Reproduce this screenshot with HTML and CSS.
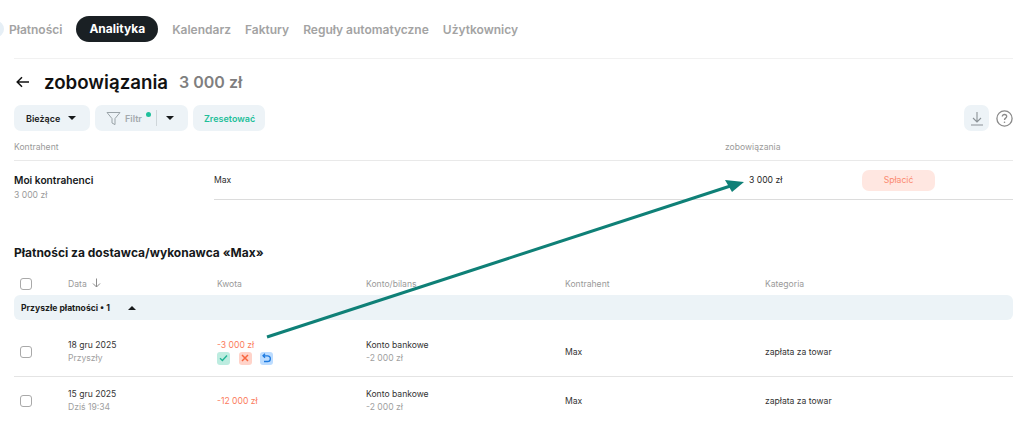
FILE: index.html
```html
<!DOCTYPE html>
<html lang="pl">
<head>
<meta charset="utf-8">
<title>zobowiązania</title>
<link rel="stylesheet" href="styles.css">
</head>
<body>
<div class="page">

    <nav class="nav">
        <span class="nav-dot"></span>
        <a class="nav-item">Płatności</a>
        <a class="nav-item active">Analityka</a>
        <a class="nav-item">Kalendarz</a>
        <a class="nav-item">Faktury</a>
        <a class="nav-item">Reguły automatyczne</a>
        <a class="nav-item">Użytkownicy</a>
    </nav>

    <div class="title-row">
        <svg class="back" width="14" height="12" viewBox="0 0 14 12"><path d="M13 6H1.5M6 1.2 1.2 6 6 10.8" fill="none" stroke="#111" stroke-width="1.5"/></svg>
        <h1>zobowiązania</h1>
        <span class="title-sum">3 000 zł</span>
    </div>

    <div class="toolbar">
        <button class="btn btn-period">Bieżące <i class="caret"></i></button>
        <div class="btn btn-filter">
            <svg width="15" height="15" viewBox="0 0 15 15"><path d="M1 1.5h13L9 7.6v6L6 12V7.6z" fill="none" stroke="#9aa3a8" stroke-width="1"/></svg>
            <span class="filter-label">Filtr</span>
            <span class="filter-dot"></span>
            <span class="filter-sep"></span>
            <i class="caret"></i>
        </div>
        <button class="btn btn-reset">Zresetować</button>
        <div class="toolbar-right">
            <div class="btn-download">
                <svg width="14" height="15" viewBox="0 0 14 15"><path d="M7 1v9.5M3 7l4 4 4-4M1 14h12" fill="none" stroke="#8b9297" stroke-width="1.1"/></svg>
            </div>
            <svg class="help" width="17" height="17" viewBox="0 0 17 17"><circle cx="8.5" cy="8.5" r="7.6" fill="none" stroke="#8a8a8a" stroke-width="1.3"/><path d="M6.3 6.6c0-1.3 1-2.1 2.2-2.1s2.2.8 2.2 2c0 1.7-2.2 1.6-2.2 3.4" fill="none" stroke="#8a8a8a" stroke-width="1.3"/><circle cx="8.5" cy="12.2" r=".8" fill="#8a8a8a"/></svg>
        </div>
    </div>

    <div class="summary-head">
        <span class="summary-name">Kontrahent</span>
        <span>zobowiązania</span>
    </div>
    <div class="summary">
        <div class="summary-left">
            <b>Moi kontrahenci</b>
            <span>3 000 zł</span>
        </div>
        <div class="summary-row">
            <span class="summary-max">Max</span>
            <span class="summary-sum">3 000 zł</span>
            <button class="btn-pay">Spłacić</button>
        </div>
    </div>

    <h2>Płatności za dostawca/wykonawca «Max»</h2>

    <div class="grid grid-head">
        <span class="check"></span>
        <span>Data <svg width="9" height="10" viewBox="0 0 9 10"><path d="M4.5 .5v8.5M1 5.5 4.5 9 8 5.5" fill="none" stroke="#8c8c8c" stroke-width="1"/></svg></span>
        <span>Kwota</span>
        <span>Konto/bilans</span>
        <span>Kontrahent</span>
        <span>Kategoria</span>
    </div>

    <div class="group">Przyszłe płatności • 1 <i class="caret-up"></i></div>

    <div class="grid row row-first">
        <span class="check"></span>
        <div class="two">18 gru 2025<small>Przyszły</small></div>
        <div class="two amount">-3 000 zł
            <div class="actions">
                <span class="act act-ok"><svg width="9" height="8" viewBox="0 0 9 8"><path d="M1 4.2 3.4 6.5 8 1.5" fill="none" stroke="#1fb594" stroke-width="1.4"/></svg></span>
                <span class="act act-no"><svg width="8" height="8" viewBox="0 0 8 8"><path d="M1 1l6 6M7 1 1 7" fill="none" stroke="#f8663f" stroke-width="1.5"/></svg></span>
                <span class="act act-undo"><svg width="9" height="10" viewBox="0 0 9 10"><path d="M3 .8 1 2.8l2 2M1 2.8h4.5a2.6 2.6 0 0 1 0 5.7H2" fill="none" stroke="#1e7be0" stroke-width="1.3"/></svg></span>
            </div>
        </div>
        <div class="two">Konto bankowe<small>-2 000 zł</small></div>
        <span>Max</span>
        <span>zapłata za towar</span>
    </div>

    <div class="grid row">
        <span class="check"></span>
        <div class="two">15 gru 2025<small>Dziś 19:34</small></div>
        <div class="amount">-12 000 zł</div>
        <div class="two">Konto bankowe<small>-2 000 zł</small></div>
        <span>Max</span>
        <span>zapłata za towar</span>
    </div>

    <!-- annotation drawn over the screenshot -->
    <svg class="annotation" width="1024" height="429" viewBox="0 0 1024 429">
        <path d="M267 337 735 184.5" stroke="#0f8077" stroke-width="3" fill="none"/>
        <path d="M744 182 725 180 732 192z" fill="#0f8077"/>
    </svg>
</div>
</body>
</html>
```

FILE: styles.css
```css
* {
    box-sizing: border-box;
}

body {
    margin: 0;
    background: #fff;
    font-family: Inter, "Noto Sans", sans-serif;
    color: #2b2b2b;
}

.page {
    position: relative;
    width: 1024px;
    height: 429px;
    overflow: hidden;
    padding: 0 11px 0 14px;
}

/* top menu */
.nav {
    position: relative;
    display: flex;
    align-items: center;
    height: 59px;
    margin-left: -14px;
    margin-right: -11px;
    padding: 0 0 1px 9px;
    font-size: 12px;
    font-weight: 600;
    color: #a3a3a3;
}

.nav::after {
    content: "";
    position: absolute;
    left: 14px;
    right: 11px;
    bottom: 0;
    height: 1px;
    background: #f1f1f1;
}

.nav-dot {
    position: absolute;
    left: -12px;
    top: 21px;
    width: 16px;
    height: 16px;
    border-radius: 50%;
    background: #e6eff6;
}

.nav-item {
    margin-right: 14px;
    white-space: nowrap;
}

.nav-item.active {
    margin: 0 14px 0 0;
    padding: 0 13px;
    height: 26px;
    line-height: 26px;
    border-radius: 13px;
    background: #1a2024;
    color: #fff;
    font-weight: 700;
}

/* title */
.title-row {
    display: flex;
    align-items: center;
    height: 46px;
    padding-left: 2px;
}

.back {
    margin-right: 14px;
}

h1 {
    margin: 0 11px 0 0;
    font-size: 18.7px;
    font-weight: 600;
    color: #111;
}

.title-sum {
    font-size: 16px;
    font-weight: 600;
    color: #7f7f7f;
}

/* filters */
.toolbar {
    display: flex;
    align-items: flex-start;
    gap: 5px;
    height: 37px;
}

.btn {
    display: flex;
    align-items: center;
    height: 26px;
    border: none;
    border-radius: 7px;
    background: #edf3f7;
    font-family: inherit;
    font-size: 9px;
    font-weight: 600;
}

.btn-period {
    width: 76px;
    padding: 0 0 0 12px;
    color: #1b1b1b;
}

.btn-period .caret {
    margin-left: 8px;
}

.caret {
    display: inline-block;
    border-left: 4.5px solid transparent;
    border-right: 4.5px solid transparent;
    border-top: 4.5px solid #16191b;
}

.btn-filter {
    position: relative;
    width: 93px;
    padding-left: 11px;
    color: #a3a9ad;
}

.filter-label {
    margin-left: 4px;
}

.filter-dot {
    width: 5px;
    height: 5px;
    margin: -8px 0 0 4px;
    border-radius: 50%;
    background: #1fc09c;
}

.filter-sep {
    width: 1px;
    height: 16px;
    margin: 0 9px 0 5px;
    background: #cfd6da;
}

.btn-reset {
    width: 72px;
    padding: 0 0 0 11px;
    color: #1fbf9a;
}

.toolbar-right {
    display: flex;
    align-items: center;
    gap: 7px;
    margin-left: auto;
}

.btn-download {
    display: flex;
    align-items: center;
    justify-content: center;
    width: 25px;
    height: 26px;
    border-radius: 7px;
    background: #edf3f7;
}

/* summary table */
.summary-head {
    display: flex;
    height: 19px;
    border-bottom: 1px solid #e9e9e9;
    font-size: 8.6px;
    line-height: 11px;
    color: #9a9a9a;
}

.summary-name {
    width: 711px;
}

.summary {
    display: flex;
    height: 39px;
}

.summary-left {
    width: 200px;
    padding-top: 13px;
}

.summary-left b {
    display: block;
    font-size: 10.2px;
    line-height: 13px;
    font-weight: 600;
    color: #16191b;
}

.summary-left span {
    display: block;
    margin-top: 3px;
    font-size: 8.6px;
    line-height: 11px;
    color: #9a9a9a;
}

.summary-row {
    flex: 1;
    display: flex;
    align-items: center;
    border-bottom: 1px solid #dcdcdc;
    font-size: 8.6px;
}

.summary-max {
    width: 535px;
}

.summary-sum {
    width: 113px;
    color: #1f1f1f;
}

.btn-pay {
    width: 73px;
    height: 21px;
    border: none;
    border-radius: 7px;
    background: #ffe7e1;
    color: #fb8a70;
    font-family: inherit;
    font-size: 8.6px;
}

h2 {
    margin: 43px 0 0;
    height: 29px;
    font-size: 12px;
    line-height: 20px;
    font-weight: 700;
    color: #16191b;
}

/* payments table */
.grid {
    display: grid;
    grid-template-columns: 54px 149px 149px 199px 200px 1fr;
    align-items: center;
    font-size: 8.6px;
}

.grid-head {
    height: 23px;
    color: #9a9a9a;
}

.grid-head svg {
    margin-left: 3px;
    vertical-align: -1px;
}

.check {
    display: block;
    width: 12px;
    height: 12px;
    margin-left: 6px;
    border: 1px solid #a9a9a9;
    border-radius: 3px;
    background: #fff;
}

.group {
    display: flex;
    align-items: center;
    height: 25px;
    padding-left: 7px;
    border-radius: 6px;
    background: #ecf3f7;
    font-size: 8.6px;
    font-weight: 700;
    color: #1b1b1b;
}

.caret-up {
    margin-left: 18px;
    border-left: 4.5px solid transparent;
    border-right: 4.5px solid transparent;
    border-bottom: 4px solid #16191b;
}

.row {
    height: 47px;
    color: #333;
}

.row-first {
    height: 57px;
    padding-top: 7px;
    border-bottom: 1px solid #e4e4e4;
}

.two {
    line-height: 13px;
}

small {
    display: block;
    font-size: 8.6px;
    color: #a0a0a0;
}

.amount {
    color: #fb7b5c;
}

.actions {
    display: flex;
    gap: 8.5px;
}

.act {
    display: flex;
    align-items: center;
    justify-content: center;
    width: 13px;
    height: 13px;
    border-radius: 3px;
}

.act-ok {
    background: #bdece0;
}

.act-no {
    background: #ffd3c9;
}

.act-undo {
    background: #bcdcff;
}

.annotation {
    position: absolute;
    left: 0;
    top: 0;
    pointer-events: none;
}
```
